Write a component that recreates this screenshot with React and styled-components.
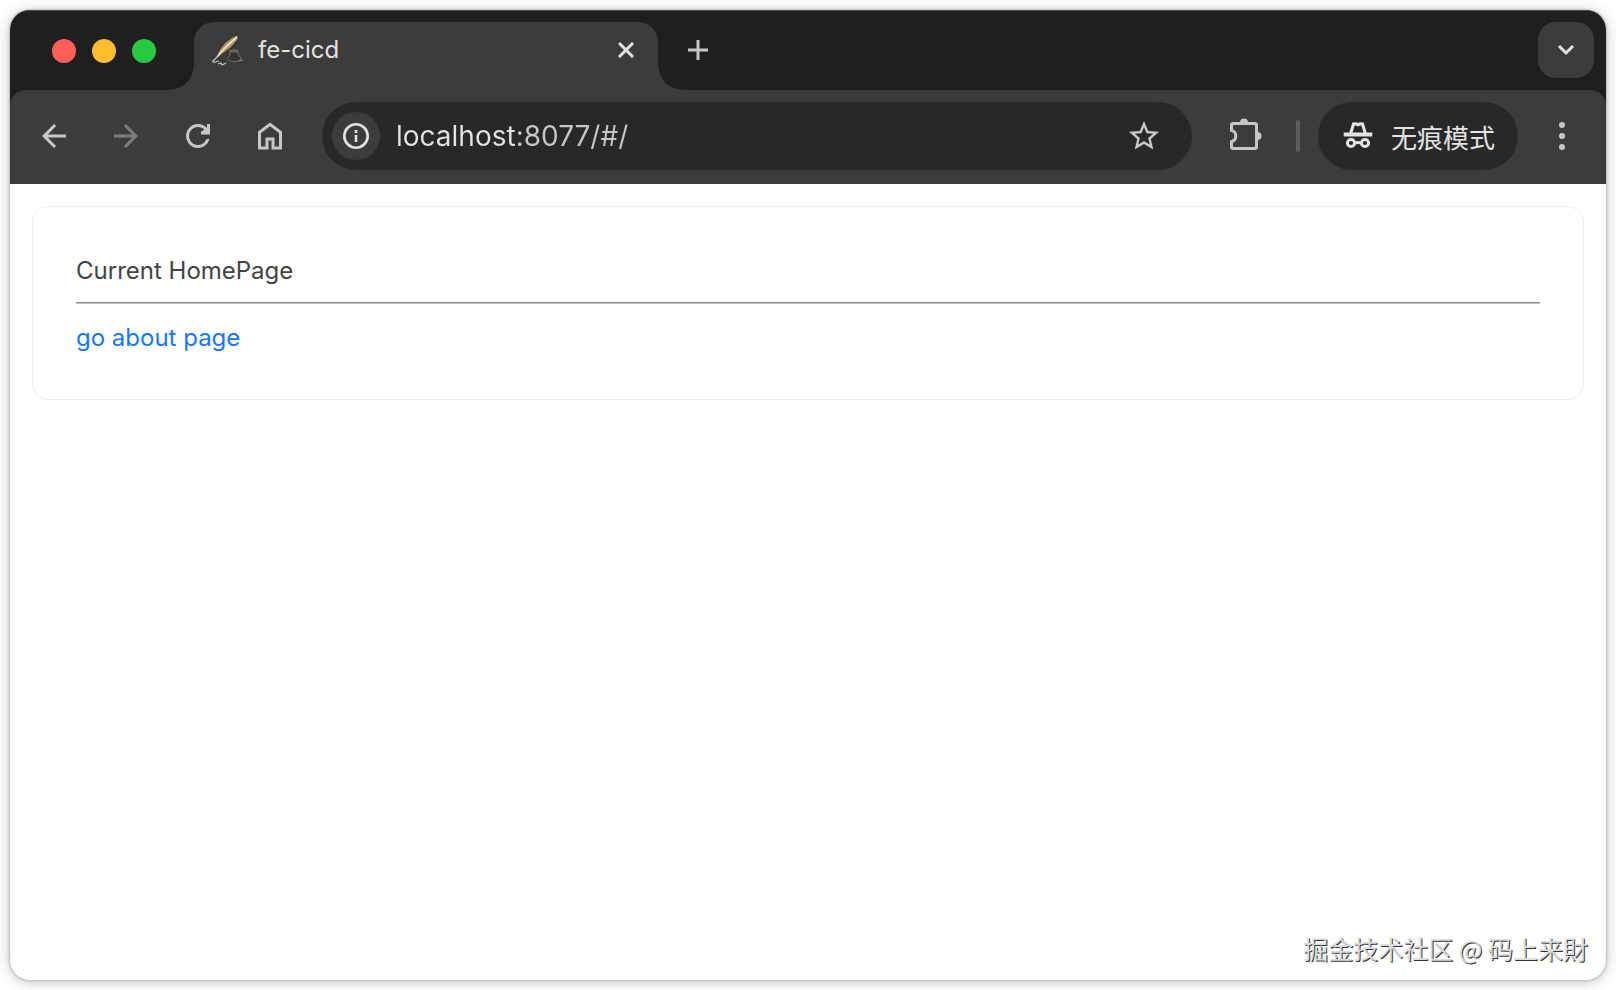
import React from "react";
import styled, { createGlobalStyle, css } from "styled-components";

const GlobalStyle = createGlobalStyle`
  * {
    box-sizing: border-box;
  }

  body {
    margin: 0;
    background: #fff;
    font-family: Inter, "Noto Sans CJK SC", sans-serif;
  }

  button {
    padding: 0;
    border: 0;
    background: none;
    color: inherit;
    font: inherit;
    cursor: pointer;
  }

  svg {
    display: block;
    flex: none;
  }
`;

const Window = styled.div`
  position: relative;
  display: flex;
  flex-direction: column;
  min-height: calc(100vh - 20px);
  margin: 10px;
  border-radius: 20px;
  overflow: hidden;
  background: #fff;
  box-shadow: 0 0 3px rgba(0, 0, 0, 0.35), 0 2px 14px rgba(0, 0, 0, 0.24);
`;

const Desktop = styled.div`
  display: flow-root;
`;

const TabStrip = styled.header`
  display: flex;
  align-items: flex-end;
  height: 80px;
  padding: 0 12px 0 42px;
  border-top: 1px solid #4c4c4c;
  background: #1f1f1f;
`;

const Lights = styled.div`
  display: flex;
  align-items: center;
  gap: 16px;
  height: 78px;
  margin-right: 38px;
`;

const Light = styled.button`
  width: 24px;
  height: 24px;
  border-radius: 50%;
  && {
    background: ${(props) => props.$color};
  }
`;

const flare = css`
  content: "";
  position: absolute;
  bottom: 0;
  width: 24px;
  height: 24px;
`;

const Tab = styled.div`
  position: relative;
  display: flex;
  align-items: center;
  width: 464px;
  height: 68px;
  padding: 0 20px 12px 18px;
  border-radius: 20px 20px 0 0;
  background: #3c3c3c;
  color: #e3e3e3;

  &::before {
    ${flare}
    right: 100%;
    background: radial-gradient(circle at 0 0, transparent 23px, #3c3c3c 24px);
  }

  &::after {
    ${flare}
    left: 100%;
    background: radial-gradient(circle at 100% 0, transparent 23px, #3c3c3c 24px);
  }
`;

const TabTitle = styled.span`
  flex: 1;
  margin-left: 14px;
  font-size: 24px;
  line-height: 32px;
`;

const StripButton = styled.button`
  display: grid;
  place-items: center;
  width: ${(props) => props.$size}px;
  height: ${(props) => props.$size}px;
`;

const NewTab = styled(StripButton)`
  margin: 0 0 26px 26px;
  color: #c7c7c7;
`;

const TabSearch = styled(StripButton)`
  margin: 0 0 12px auto;
  border-radius: 18px;
  && {
    background: #3c3c3c;
    color: #e3e3e3;
  }
`;

const Toolbar = styled.nav`
  display: flex;
  align-items: center;
  height: 94px;
  padding: 0 26px 2px;
  border-radius: 16px 16px 0 0;
  background: #3c3c3c;
  color: #c7c7c7;
`;

const ToolbarBack = styled.div`
  background: #1f1f1f;
`;

const NavButtons = styled.div`
  display: flex;
  gap: 36px;
  margin-right: 34px;
`;

const IconButton = styled.button`
  display: grid;
  place-items: center;
  width: 36px;
  height: 36px;

  &:disabled {
    color: #7c7c7c;
    cursor: default;
  }
`;

const AddressBar = styled.div`
  display: flex;
  flex: 1;
  align-items: center;
  height: 68px;
  padding: 0 30px 0 10px;
  border-radius: 34px;
  background: #282828;
`;

const SiteInfo = styled.button`
  display: grid;
  place-items: center;
  width: 48px;
  height: 48px;
  border-radius: 50%;
  && {
    background: #3c3c3c;
    color: #e3e3e3;
  }
`;

/* the host part is brighter than the port and path */
const AddressInput = styled.input`
  flex: 1;
  min-width: 0;
  margin-left: 16px;
  padding: 0;
  border: 0;
  outline: 0;
  background: linear-gradient(90deg, #e3e3e3 120px, #c7c7c7 120px);
  background-clip: text;
  -webkit-text-fill-color: transparent;
  font-family: inherit;
  font-size: 28px;
  line-height: 40px;
`;

const Extensions = styled(IconButton)`
  margin: 0 32px 0 36px;
`;

const Separator = styled.span`
  width: 4px;
  height: 32px;
  border-radius: 2px;
  background: #5e5e5e;
`;

const Incognito = styled.button`
  display: flex;
  align-items: center;
  gap: 18px;
  width: 200px;
  height: 68px;
  margin: 0 26px 0 18px;
  border-radius: 34px;
  && {
    padding-left: 25px;
    background: #282828;
    color: #e3e3e3;
    font-size: 26px;
  }
`;

const Page = styled.main`
  padding: 22px;
`;

const Card = styled.section`
  padding: 42px 43px 39px;
  border: 1px solid #ececec;
  border-radius: 16px;
  color: #434343;
  font-size: 24px;
  line-height: 44px;
`;

const Heading = styled.p`
  margin: 0;
`;

const Divider = styled.hr`
  margin: 9px 0 12px;
  border: 0;
  border-top: 1px solid #8c8c8c;
  border-bottom: 1px solid #c4c4c4;
`;

const PageLink = styled.a`
  display: block;
  width: fit-content;
  color: #1677ff;
  text-decoration: none;
`;

const Watermark = styled.div`
  position: absolute;
  right: 18px;
  bottom: 14px;
  color: #dcdcdc;
  font-family: "Noto Sans CJK SC", sans-serif;
  font-size: 25px;
  line-height: 36px;
  text-shadow: 1px 1px 0 #333;
`;

const icons = {
  back: "M20 11H7.83l5.59-5.59L12 4l-8 8 8 8 1.41-1.41L7.83 13H20z",
  forward: "M4 11h12.17l-5.59-5.59L12 4l8 8-8 8-1.41-1.41L16.17 13H4z",
  reload:
    "M17.65 6.35A7.95 7.95 0 0 0 12 4a8 8 0 1 0 7.73 10h-2.08A6 6 0 1 1 12 6c1.66 0 3.14.69 4.22 1.78L14 9v2h6V4h-2v2.7z",
  home: "M6 19h3v-6h6v6h3v-9l-6-4.5L6 10zM4 21V9l8-6 8 6v12h-7v-6h-2v6z",
  star: "M22 9.24l-7.19-.62L12 2 9.19 8.63 2 9.24l5.46 4.73L5.82 21 12 17.27 18.18 21l-1.63-7.03zM12 15.4l-3.76 2.27 1-4.28-3.32-2.88 4.38-.38L12 6.1l1.71 4.04 4.38.38-3.32 2.88 1 4.28z",
};

const Icon = ({ name }) => (
  <svg width="36" height="36" viewBox="0 0 24 24" fill="currentColor">
    <path fillRule="evenodd" d={icons[name]} />
  </svg>
);

const Stroke = ({ width, height, weight = 3, children }) => (
  <svg
    width={width}
    height={height}
    viewBox={`0 0 ${width} ${height}`}
    fill="none"
    stroke="currentColor"
    strokeWidth={weight}>
    {children}
  </svg>
);

const Quill = () => (
  <svg width="32" height="32" viewBox="0 0 32 32" fill="none">
    <path
      d="M6 21C8 13 16 4 25 2c2 3-3 8-7 12-4 3-7 5-11 7z"
      fill="#a8926c"
      stroke="#75695a"
      strokeWidth=".7"
    />
    <path d="M6 22C11 15 18 9 25 3" stroke="#f0dfb8" strokeWidth="2" />
    <path d="M6 17c3-6 8-10 13-13M13 19c5-3 9-7 11-11" stroke="#282522" />
    <path d="M0 28c2-2 4-4 7-7" stroke="#cfcfcf" strokeWidth="1.2" />
    <path
      d="M1 28c3 1 4-1 6-1M6 30l3-1 1 2 4-2"
      stroke="#c9c9c9"
      strokeWidth="1.1"
    />
    <path
      d="M18 18h8l1 4c2 1 2 3 2 4-4 2-9 2-13 0-1-2 0-3 2-4z"
      fill="#35322f"
      stroke="#756c60"
    />
    <path d="M17 17l4-1 5 1M26 27l5-1" stroke="#8f8677" />
  </svg>
);

export default function App() {
  return (
    <Desktop>
      <GlobalStyle />
      <Window>
        <TabStrip>
          <Lights>
            <Light $color="#ff5f57" aria-label="Close window" />
            <Light $color="#febc2e" aria-label="Minimize window" />
            <Light $color="#28c840" aria-label="Zoom window" />
          </Lights>
          <Tab>
            <Quill />
            <TabTitle>fe-cicd</TabTitle>
            <StripButton $size={24} aria-label="Close tab">
              <Stroke width={16} height={16}>
                <path d="M1 1l14 14M15 1L1 15" />
              </Stroke>
            </StripButton>
          </Tab>
          <NewTab $size={28} aria-label="New tab">
            <Stroke width={20} height={20}>
              <path d="M10 0v20M0 10h20" />
            </Stroke>
          </NewTab>
          <TabSearch $size={56} aria-label="Search tabs">
            <Stroke width={18} height={12}>
              <path d="M2 2l7 7 7-7" />
            </Stroke>
          </TabSearch>
        </TabStrip>

        <ToolbarBack>
          <Toolbar>
            <NavButtons>
              <IconButton aria-label="Back">
                <Icon name="back" />
              </IconButton>
              <IconButton aria-label="Forward" disabled>
                <Icon name="forward" />
              </IconButton>
              <IconButton aria-label="Reload">
                <Icon name="reload" />
              </IconButton>
              <IconButton aria-label="Home">
                <Icon name="home" />
              </IconButton>
            </NavButtons>
            <AddressBar>
              <SiteInfo aria-label="Site information">
                <Stroke width={26} height={26} weight={2.6}>
                  <circle cx="13" cy="13" r="11.7" />
                  <path d="M13 12v7M13 7v3" />
                </Stroke>
              </SiteInfo>
              <AddressInput
                aria-label="Address"
                defaultValue="localhost:8077/#/"
                spellCheck={false}
              />
              <IconButton aria-label="Bookmark this page">
                <Icon name="star" />
              </IconButton>
            </AddressBar>
            <Extensions aria-label="Extensions">
              <Stroke width={32} height={36}>
                <path d="M3 5.5h22q1.5 0 1.5 1.5v22q0 1.5-1.5 1.5H3q-1.5 0-1.5-1.5v-5.4a5.8 5.8 0 0 0 0-11.2V7q0-1.5 1.5-1.5z" />
                <path
                  d="M10 4.5a4 4 0 0 1 8 0zM27.5 14a4 4 0 0 1 0 8z"
                  fill="currentColor"
                  stroke="none"
                />
              </Stroke>
            </Extensions>
            <Separator />
            <Incognito>
              <Stroke width={30} height={30}>
                <path d="M.7 13.5h28.6" strokeWidth="4" />
                <path d="M7.5 13L10.5 3l2.500-.2 2 1 2-1 2.500.2 3 10" />
                <circle cx="8" cy="22" r="3.6" />
                <circle cx="22" cy="22" r="3.6" />
                <path d="M11.5 22q3.5-1 7 0" />
              </Stroke>
              <span>无痕模式</span>
            </Incognito>
            <IconButton aria-label="Menu">
              <svg width="6" height="28" viewBox="0 0 6 28" fill="currentColor">
                <circle cx="3" cy="3" r="3" />
                <circle cx="3" cy="14" r="3" />
                <circle cx="3" cy="25" r="3" />
              </svg>
            </IconButton>
          </Toolbar>
        </ToolbarBack>

        <Page>
          <Card>
            <Heading>Current HomePage</Heading>
            <Divider />
            <PageLink href="#/about">go about page</PageLink>
          </Card>
        </Page>
        <Watermark>掘金技术社区 @ 码上来財</Watermark>
      </Window>
    </Desktop>
  );
}
